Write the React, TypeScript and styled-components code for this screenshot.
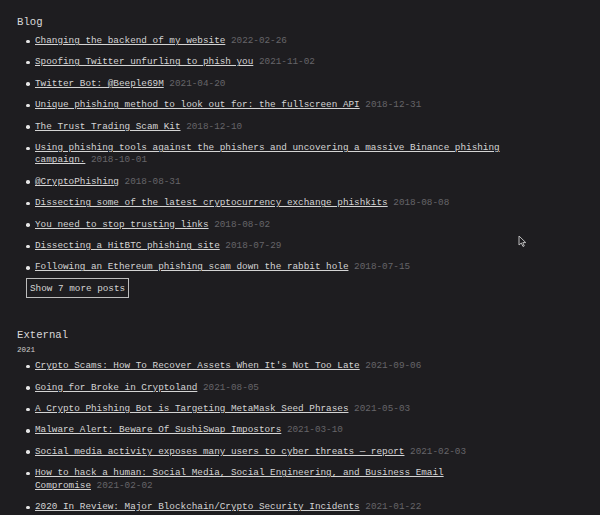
import React, { useState } from 'react';
import styled, { createGlobalStyle } from 'styled-components';

interface Post {
  title: string;
  date: string;
}

const blogPosts: Post[] = [
  { title: 'Changing the backend of my website', date: '2022-02-26' },
  { title: 'Spoofing Twitter unfurling to phish you', date: '2021-11-02' },
  { title: 'Twitter Bot: @Beeple69M', date: '2021-04-20' },
  { title: 'Unique phishing method to look out for: the fullscreen API', date: '2018-12-31' },
  { title: 'The Trust Trading Scam Kit', date: '2018-12-10' },
  {
    title: 'Using phishing tools against the phishers and uncovering a massive Binance phishing campaign.',
    date: '2018-10-01',
  },
  { title: '@CryptoPhishing', date: '2018-08-31' },
  { title: 'Dissecting some of the latest cryptocurrency exchange phishkits', date: '2018-08-08' },
  { title: 'You need to stop trusting links', date: '2018-08-02' },
  { title: 'Dissecting a HitBTC phishing site', date: '2018-07-29' },
  { title: 'Following an Ethereum phishing scam down the rabbit hole', date: '2018-07-15' },
];

const externalPosts: Post[] = [
  { title: "Crypto Scams: How To Recover Assets When It's Not Too Late", date: '2021-09-06' },
  { title: 'Going for Broke in Cryptoland', date: '2021-08-05' },
  { title: 'A Crypto Phishing Bot is Targeting MetaMask Seed Phrases', date: '2021-05-03' },
  { title: 'Malware Alert: Beware Of SushiSwap Impostors', date: '2021-03-10' },
  { title: 'Social media activity exposes many users to cyber threats \u2014 report', date: '2021-02-03' },
  {
    title: 'How to hack a human: Social Media, Social Engineering, and Business Email Compromise',
    date: '2021-02-02',
  },
  { title: '2020 In Review: Major Blockchain/Crypto Security Incidents', date: '2021-01-22' },
];

const GlobalStyle = createGlobalStyle`
  html, body {
    margin: 0;
    padding: 0;
    background-color: #1e1d20;
  }
  body {
    font-family: "Liberation Mono", "DejaVu Sans Mono", monospace;
    color: #d4d4d4;
  }
`;

const Page = styled.main`
  position: relative;
  min-height: 515px;
  box-sizing: border-box;
  padding: 15px 0 0 17px;
  width: 500px;
`;

const Section = styled.section`
  & + & {
    margin-top: 30px;
  }
`;

const Heading = styled.h2`
  margin: 0;
  font-size: 10.67px;
  line-height: 14px;
  font-weight: normal;
  color: #d8d8d8;
`;

const Year = styled.h3`
  margin: 3px 0 0 0;
  font-size: 7.5px;
  line-height: 10px;
  font-weight: normal;
  color: #cfcfcf;
`;

const PostList = styled.ul<{ $top: number }>`
  margin: ${p => p.$top}px 0 0 0;
  padding: 0 0 0 18px;
  list-style: none;
  font-size: 9.33px;
  line-height: 12.5px;
`;

const Item = styled.li`
  position: relative;
  margin-bottom: 8.9px;

  &::before {
    content: '';
    position: absolute;
    left: -9px;
    top: 4.6px;
    width: 3.5px;
    height: 3.5px;
    border-radius: 50%;
    background: #e6e6e6;
  }
`;

const PostLink = styled.a`
  color: #d4d4d4;
  text-decoration: underline;
  text-decoration-thickness: 1px;
  text-underline-offset: 1px;
`;

const PostDate = styled.span`
  color: #666569;
`;

const MoreButton = styled.button`
  display: block;
  margin: -4.5px 0 0 9px;
  padding: 0 3px;
  height: 20px;
  box-sizing: border-box;
  background: transparent;
  border: 1px solid #bdbdbd;
  color: #d4d4d4;
  font-family: inherit;
  font-size: 9.33px;
  cursor: pointer;
`;

const Pointer = styled.svg`
  position: absolute;
  left: 518px;
  top: 235px;
`;

const PostRow: React.FC<{ post: Post }> = ({ post }) => (
  <Item>
    <PostLink href="#">{post.title}</PostLink> <PostDate>{post.date}</PostDate>
  </Item>
);

export default function App() {
  const [expanded, setExpanded] = useState(false);

  return (
    <>
      <GlobalStyle />
      <Page>
        <Section>
          <Heading>Blog</Heading>
          <PostList $top={6}>
            {blogPosts.map(p => (
              <PostRow key={p.title} post={p} />
            ))}
          </PostList>
          {!expanded && (
            <MoreButton onClick={() => setExpanded(true)}>Show 7 more posts</MoreButton>
          )}
        </Section>
        <Section>
          <Heading>External</Heading>
          <Year>2021</Year>
          <PostList $top={5}>
            {externalPosts.map(p => (
              <PostRow key={p.title} post={p} />
            ))}
          </PostList>
        </Section>
        <Pointer width="9" height="13" viewBox="0 0 9 13">
          <path d="M1 1 L1 10 L3.3 8 L5 11.5 L6.3 10.9 L4.8 7.6 L7.8 7.6 Z" fill="#1e1d20" stroke="#bbb" strokeWidth="1" />
        </Pointer>
      </Page>
    </>
  );
}
